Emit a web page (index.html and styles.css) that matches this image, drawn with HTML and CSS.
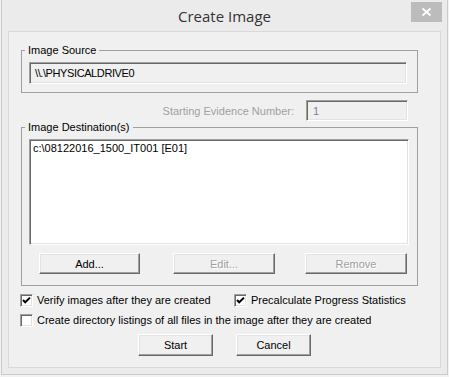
FILE: index.html
```html
<!DOCTYPE html>
<html lang="en">
<head>
  <meta charset="UTF-8" />
  <title>Create Image</title>
  <meta name="viewport" content="width=device-width, initial-scale=1.0" />
  <link rel="stylesheet" href="styles.css">
</head>
<body>
  <div class="window">
    <div class="titlebar">
      <span></span>
      <div class="title">Create Image</div>
      <button class="close" aria-label="Close">
        <svg width="31" height="20" viewBox="0 0 31 20">
          <path d="M11.5 6.5 L19.5 13.5 M19.5 6.5 L11.5 13.5" stroke="#fff" stroke-width="1.7" fill="none" />
        </svg>
      </button>
    </div>

    <div class="client">
      <fieldset class="group source">
        <legend>Image Source</legend>
        <div class="group-body">
          <div class="field source-field">\\.\PHYSICALDRIVE0</div>
        </div>
      </fieldset>

      <div class="evidence">
        <span class="evidence-label">Starting Evidence Number:</span>
        <div class="field evidence-field">1</div>
      </div>

      <fieldset class="group dest">
        <legend>Image Destination(s)</legend>
        <div class="group-body">
          <div class="listbox">
            <div class="list-item">c:\08122016_1500_IT001 [E01]</div>
          </div>
          <div class="list-buttons">
            <button class="btn add">Add...</button>
            <button class="btn edit" disabled>Edit...</button>
            <button class="btn remove" disabled>Remove</button>
          </div>
        </div>
      </fieldset>

      <div class="options">
        <label class="check">
          <span class="box">
            <svg width="11" height="11" viewBox="0 0 11 11"><path d="M2 5 L4.2 7.3 L9 2.6" stroke="#000" stroke-width="2" fill="none" /></svg>
          </span>
          Verify images after they are created
        </label>
        <label class="check">
          <span class="box">
            <svg width="11" height="11" viewBox="0 0 11 11"><path d="M2 5 L4.2 7.3 L9 2.6" stroke="#000" stroke-width="2" fill="none" /></svg>
          </span>
          Precalculate Progress Statistics
        </label>
        <label class="check full">
          <span class="box"></span>
          Create directory listings of all files in the image after they are created
        </label>
      </div>

      <div class="actions">
        <button class="btn action">Start</button>
        <button class="btn action">Cancel</button>
      </div>
    </div>
  </div>
</body>
</html>
```

FILE: styles.css
```css
:root {
  --frame: #ebebeb;
  --face: #f0f0f0;
  --dark: #696969;
  --shadow: #a0a0a0;
  --light: #e3e3e3;
  --disabled: #a0a0a0;
}

body {
  margin: 0;
  background: #f2f2f2;
  font-family: "Liberation Sans", Arial, sans-serif;
  font-size: 11px;
  color: #000;
}

.window {
  width: 447px;
  margin-left: 1px;
  box-sizing: border-box;
  background: var(--frame);
  border: 1px solid #cbcbcb;
  border-top: none;
  padding-bottom: 6px;
}

/* title bar */
.titlebar {
  height: 31px;
  display: grid;
  grid-template-columns: 1fr auto 1fr;
}

.title {
  font-family: "Open Sans", "Noto Sans", sans-serif;
  font-size: 15px;
  line-height: 33px;
  color: #333;
}

.close {
  justify-self: end;
  align-self: start;
  width: 31px;
  height: 20px;
  margin: 2px 5px 0 0;
  padding: 0;
  border: none;
  background: #bcbcbc;
  display: flex;
}

/* dialog area */
.client {
  height: 337px;
  box-sizing: border-box;
  margin: 0 6px;
  background: var(--face);
  border: 1px solid #d9d9d9;
}

.group {
  width: 397px;
  box-sizing: border-box;
  min-width: 0;
  margin: 0 0 0 12px;
  padding: 0;
  border: 1px solid var(--shadow);
}

.group legend {
  margin-left: 3px;
  padding: 0 3px;
  line-height: 13px;
}

.source {
  margin-top: 12px;
}

.source .group-body {
  padding: 5px 0 8px 7px;
}

.dest .group-body {
  padding: 5px 0 11px 7px;
}

/* sunken edit fields */
.field,
.listbox,
.box {
  box-sizing: border-box;
  border: 1px solid;
  border-color: var(--shadow) #fff #fff var(--shadow);
  box-shadow: inset 1px 1px 0 var(--dark), inset -1px -1px 0 var(--light);
}

.field {
  display: flex;
  align-items: center;
  background: var(--face);
}

.source-field {
  width: 378px;
  height: 22px;
  padding-left: 5px;
  letter-spacing: -0.4px;
}

.evidence {
  width: 397px;
  box-sizing: border-box;
  height: 21px;
  margin: 7px 0 0 12px;
  padding-right: 10px;
  display: flex;
  justify-content: flex-end;
  align-items: center;
  gap: 12px;
}

.evidence-label {
  color: var(--disabled);
}

.evidence-field {
  width: 102px;
  height: 21px;
  padding-left: 6px;
  color: #7d7d9c;
}

.listbox {
  width: 380px;
  height: 106px;
  background: #fff;
  padding: 2px 3px;
}

.list-item {
  line-height: 13px;
}

/* raised buttons */
.btn {
  box-sizing: border-box;
  padding: 0;
  background: var(--face);
  font-family: inherit;
  font-size: 11px;
  color: #000;
  border: 1px solid;
  border-color: #fff var(--dark) var(--dark) #fff;
  box-shadow: inset -1px -1px 0 var(--shadow), inset 1px 1px 0 var(--light);
}

.btn:disabled {
  color: var(--disabled);
  text-shadow: 1px 1px 0 #fff;
}

.list-buttons {
  display: flex;
  margin: 8px 0 0 10px;
}

.list-buttons .btn {
  height: 21px;
  width: 102px;
}

.list-buttons .add {
  width: 101px;
  margin-right: 33px;
}

.list-buttons .edit {
  margin-right: 30px;
}

/* check boxes */
.options {
  display: grid;
  grid-template-columns: 214px auto;
  row-gap: 7px;
  margin: 8px 0 0 11px;
}

.check {
  display: flex;
  align-items: center;
  gap: 4px;
  height: 13px;
  line-height: 13px;
}

.check.full {
  grid-column: 1 / 3;
}

.box {
  width: 13px;
  height: 13px;
  background: #fff;
  display: flex;
  align-items: center;
  justify-content: center;
  flex: none;
}

.actions {
  display: flex;
  justify-content: center;
  gap: 23px;
  margin-top: 7px;
}

.action {
  width: 75px;
  height: 22px;
}
```
